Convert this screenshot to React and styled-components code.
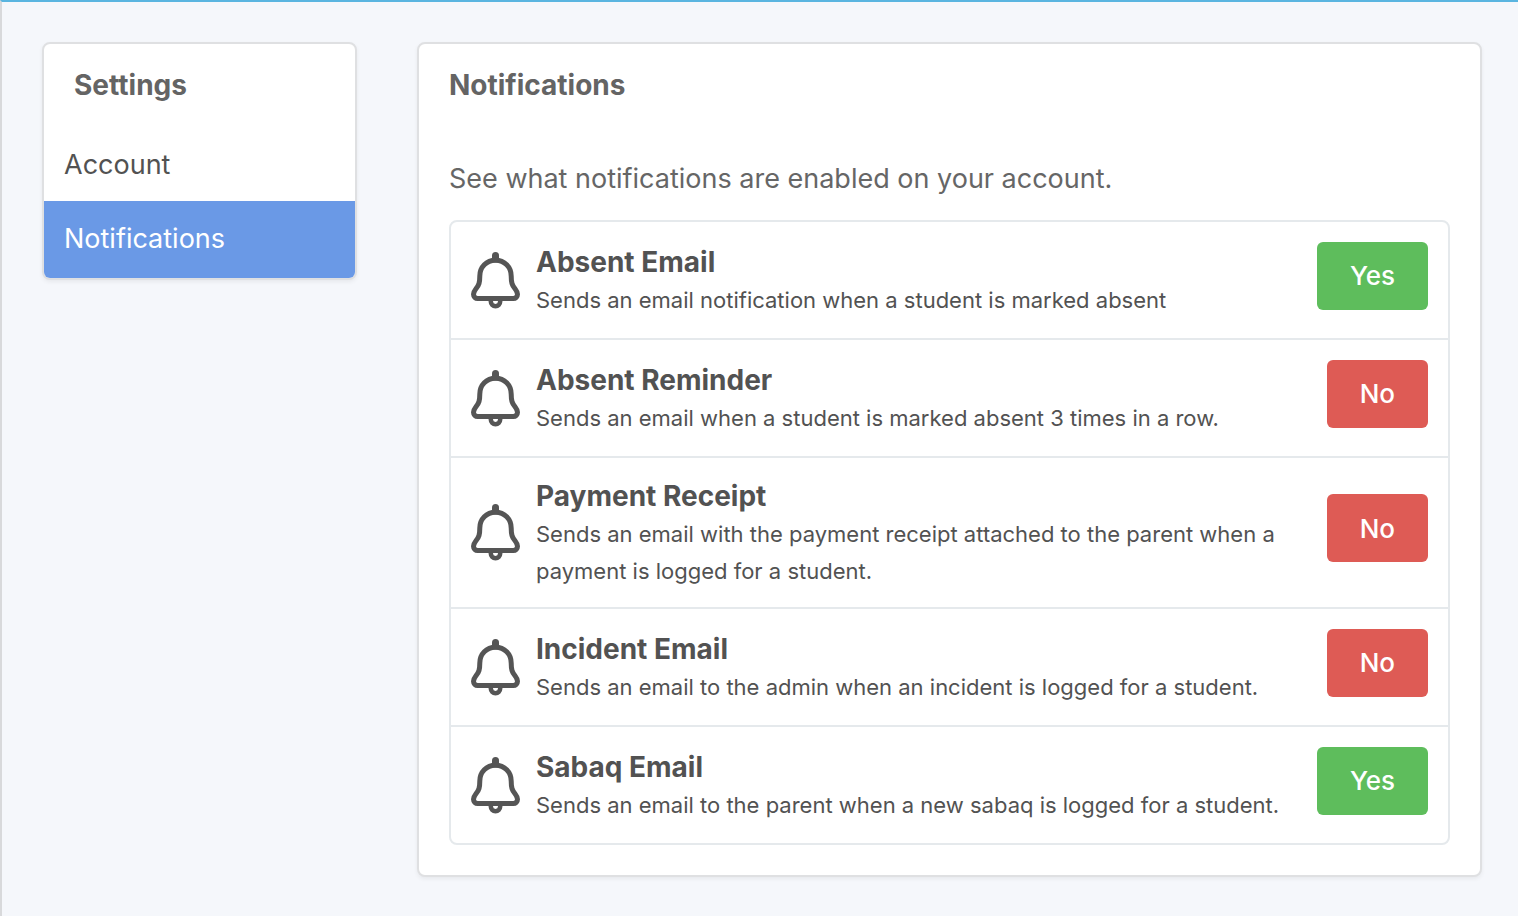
import React from "react";
import styled, { createGlobalStyle } from "styled-components";

const GlobalStyle = createGlobalStyle`
  * { box-sizing: border-box; }
  body {
    margin: 0;
    background: #f5f7fb;
    color: #525252;
    font-family: Inter, "Liberation Sans", sans-serif;
    font-size: 27px;
    line-height: 38px;
  }
`;

const Page = styled.div`
  min-height: 100vh;
  display: flex;
  align-items: flex-start;
  gap: 60px;
  padding: 40px 36px 40px 40px;
  border-top: 2px solid #5ab5e0;
  border-left: 2px solid #d8d9db;
`;

const Card = styled.section`
  background: #fff;
  border: 2px solid #dfe0e2;
  border-radius: 8px;
  box-shadow: 0 2px 4px rgba(0, 0, 0, 0.06);
`;

const Sidebar = styled(Card)`
  flex: 0 0 315px;
  overflow: hidden;
`;

const Main = styled(Card)`
  flex: 1;
  min-width: 0;
  padding: 22px 30px 30px;
`;

const Title = styled.h2`
  margin: 0;
  font-size: 28px;
  line-height: 38px;
  font-weight: 700;
  color: #646464;
`;

const SidebarTitle = styled(Title)`
  padding: 22px 30px 23px;
`;

const NavLink = styled.a`
  display: block;
  padding: 19px 20px 17px;
  text-decoration: none;
  color: ${(p) => (p.$active ? "#fff" : "#525252")};
  background: ${(p) => (p.$active ? "#6a99e6" : "transparent")};
  &:last-child { padding-bottom: 20px; }
`;

const Intro = styled.p`
  margin: 56px 0 22px;
  color: #666;
`;

const List = styled.ul`
  margin: 0;
  padding: 0;
  list-style: none;
  border: 2px solid #e5e9ec;
  border-radius: 8px;
`;

const Item = styled.li`
  display: flex;
  align-items: center;
  gap: 16px;
  min-height: 116px;
  padding: 18px 20px 17px;
  & + & {
    min-height: 118px;
    border-top: 2px solid #e5e9ec;
  }
`;

const Icon = styled.svg`
  flex: none;
  width: 49px;
  height: 60px;
`;

const Info = styled.div`
  flex: 1;
  min-width: 0;
`;

const Name = styled.h3`
  margin: 0;
  font-size: 28px;
  line-height: 40px;
  font-weight: 700;
`;

const Detail = styled.p`
  margin: 0;
  font-size: 22px;
  line-height: 37px;
`;

const Toggle = styled.button`
  flex: none;
  height: 68px;
  margin-bottom: 10px;
  padding: 0 33px;
  border: 0;
  border-radius: 6px;
  font-family: inherit;
  font-size: 26px;
  font-weight: 500;
  color: #fff;
  background: ${(p) => (p.$on ? "#5ebd5c" : "#de5b55")};
`;

const BellIcon = () => (
  <Icon viewBox="0 1 49 60" fill="none" stroke="#555" strokeWidth="5" aria-hidden="true">
    <path d="M24.5 10.2C15.5 10.2 8.8 17 8.8 26C8.8 29 8.7 31 8 33.5C6.6 38.5 2.5 40 2.5 44.3C2.5 46.8 4.4 48.5 6.7 48.5H42.3C44.6 48.5 46.5 46.8 46.5 44.3C46.5 40 42.4 38.5 41 33.5C40.3 31 40.2 29 40.2 26C40.2 17 33.5 10.2 24.5 10.2Z" strokeLinejoin="round" />
    <path d="M24.5 9V5.5" strokeWidth="7" strokeLinecap="round" />
    <path d="M19.8 50.5V51.5A4.7 4.7 0 0 0 29.2 51.5V50.5" strokeWidth="4.5" />
  </Icon>
);

const notifications = [
  { name: "Absent Email", detail: "Sends an email notification when a student is marked absent", on: true },
  { name: "Absent Reminder", detail: "Sends an email when a student is marked absent 3 times in a row.", on: false },
  { name: "Payment Receipt", detail: "Sends an email with the payment receipt attached to the parent when a payment is logged for a student.", on: false },
  { name: "Incident Email", detail: "Sends an email to the admin when an incident is logged for a student.", on: false },
  { name: "Sabaq Email", detail: "Sends an email to the parent when a new sabaq is logged for a student.", on: true },
];

export default function App() {
  return (
    <>
      <GlobalStyle />
      <Page>
        <Sidebar as="nav">
          <SidebarTitle>Settings</SidebarTitle>
          <NavLink href="#account">Account</NavLink>
          <NavLink href="#notifications" $active aria-current="page">Notifications</NavLink>
        </Sidebar>
        <Main as="main">
          <Title>Notifications</Title>
          <Intro>See what notifications are enabled on your account.</Intro>
          <List>
            {notifications.map((n) => (
              <Item key={n.name}>
                <BellIcon />
                <Info>
                  <Name>{n.name}</Name>
                  <Detail>{n.detail}</Detail>
                </Info>
                <Toggle type="button" $on={n.on} aria-label={`${n.name}: ${n.on ? "Yes" : "No"}`}>
                  {n.on ? "Yes" : "No"}
                </Toggle>
              </Item>
            ))}
          </List>
        </Main>
      </Page>
    </>
  );
}
